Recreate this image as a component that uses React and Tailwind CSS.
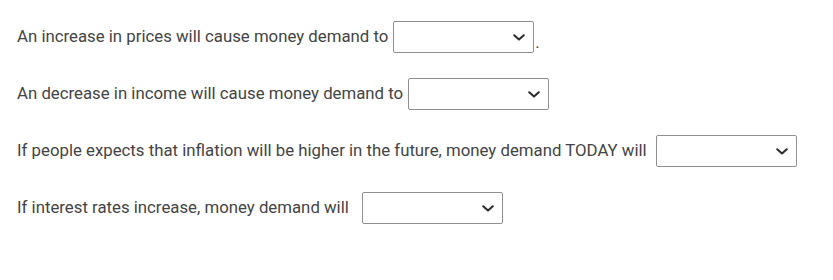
function Dropdown({ className = '' }) {
  return (
    <span
      className={`inline-flex items-center justify-end w-[141px] h-[32px] border border-[#8f8f8f] rounded-[2px] bg-white pr-[8px] align-middle ${className}`}
    >
      <svg width="12" height="7" viewBox="0 0 12 7" fill="none">
        <path d="M1.2 1.2L6 5.6l4.8-4.4" stroke="#2b2b2b" strokeWidth="2" strokeLinecap="round" strokeLinejoin="round" />
      </svg>
    </span>
  );
}

export default function App() {
  const rows = [
    { before: 'An increase in prices will cause money demand to', after: '.', gap: 'ml-[5px]' },
    { before: 'An decrease in income will cause money demand to', gap: 'ml-[5px]' },
    { before: 'If people expects that inflation will be higher in the future, money demand TODAY will', gap: 'ml-[9px]' },
    { before: 'If interest rates increase, money demand will', gap: 'ml-[13px]' },
  ];

  return (
    <div
      className="w-[833px] h-[280px] bg-white text-[#444] text-[16.8px] pl-[17px] pt-[21px]"
      style={{ fontFamily: 'Roboto, "Liberation Sans", sans-serif' }}
    >
      <div className="flex flex-col gap-[25px]">
        {rows.map((r) => (
          <div key={r.before} className="flex items-center h-[32px]">
            <span>{r.before}</span>
            <Dropdown className={r.gap} />
            {r.after && <span className="ml-[1px] self-end leading-[22px]">{r.after}</span>}
          </div>
        ))}
      </div>
    </div>
  );
}
